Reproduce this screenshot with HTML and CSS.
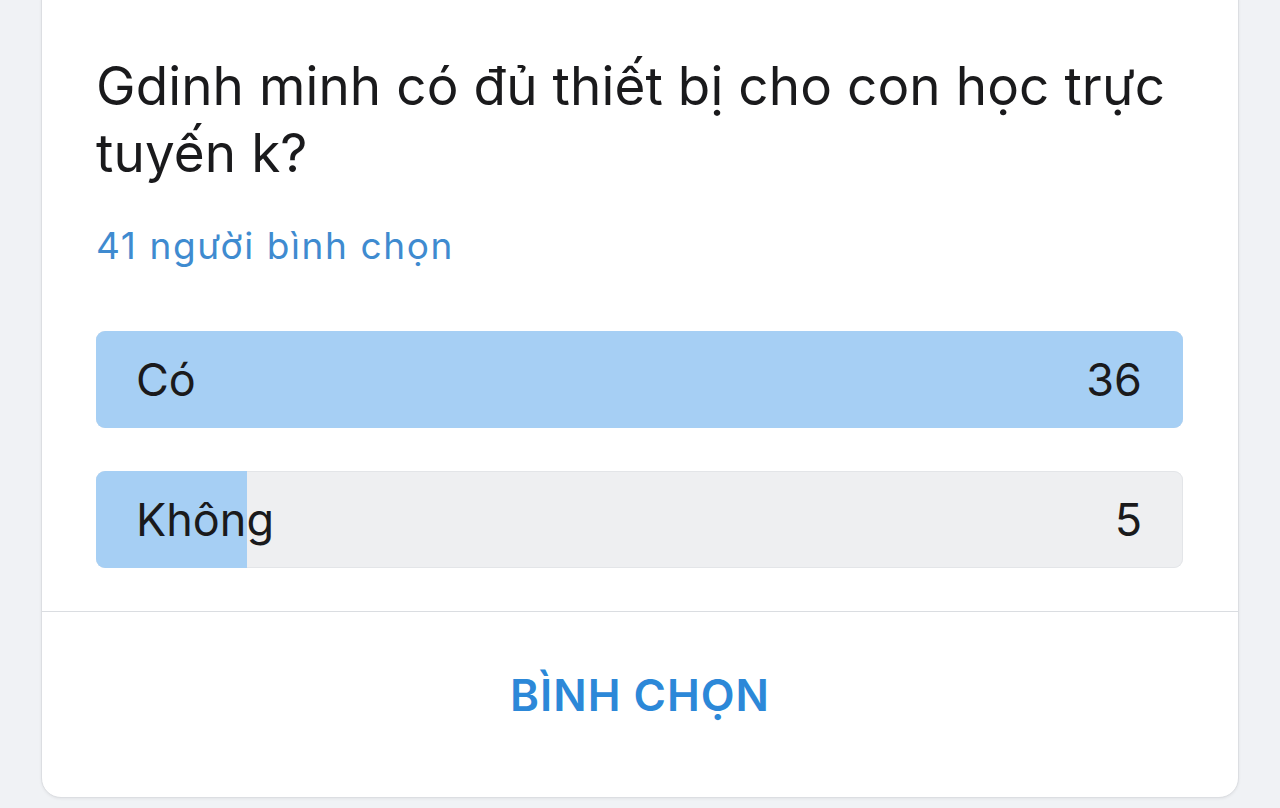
FILE: index.html
```html
<!DOCTYPE html>
<html lang="vi">
<head>
<meta charset="utf-8">
<title>Bình chọn</title>
<link rel="stylesheet" href="styles.css">
</head>
<body>
  <div class="card">
    <div class="poll">
      <h1 class="question">Gdinh minh có đủ thiết bị cho con học trực tuyến k?</h1>
      <div class="count">41 người bình chọn</div>
      <div class="options">
        <div class="option">
          <div class="fill" style="width:100%"></div>
          <span class="label">Có</span>
          <span class="num">36</span>
        </div>
        <div class="option">
          <div class="fill" style="width:13.9%"></div>
          <span class="label">Không</span>
          <span class="num">5</span>
        </div>
      </div>
    </div>
    <div class="actions">
      <button class="vote">BÌNH CHỌN</button>
    </div>
  </div>
</body>
</html>
```

FILE: styles.css
```css
html, body {
  margin: 0;
  padding: 0;
  background: #f0f2f5;
  height: 808px;
  overflow: hidden;
}

body {
  font-family: Inter, "Liberation Sans", Arial, sans-serif;
  color: #1c1e21;
}

.card {
  margin: -20px 0 0 41px;
  width: 1196px;
  background: #fff;
  border: 1px solid #dcdee2;
  border-radius: 20px;
  box-shadow: 0 1px 3px rgba(0, 0, 0, 0.06);
}

.poll {
  padding: 72px 55px 43px 54px;
  border-bottom: 1px solid #dadde1;
}

.question {
  margin: 0;
  font-size: 53px;
  line-height: 67px;
  font-weight: 400;
  color: #1a1a1c;
  letter-spacing: 0.1px;
}

.count {
  margin-top: 37px;
  font-size: 37px;
  line-height: 44px;
  color: #3f8bd0;
  letter-spacing: 1.6px;
}

.options {
  margin-top: 63px;
  display: flex;
  flex-direction: column;
  gap: 43px;
}

.option {
  position: relative;
  height: 97px;
  border-radius: 9px;
  background: #eeeff1;
  box-shadow: inset 0 0 0 1px #e3e5e8;
  overflow: hidden;
  display: flex;
  align-items: center;
  justify-content: space-between;
  padding: 0 41px 0 40px;
  box-sizing: border-box;
}

.fill {
  position: absolute;
  left: 0;
  top: 0;
  bottom: 0;
  background: #a6cff4;
}

.label, .num {
  position: relative;
  font-size: 45px;
  line-height: 54px;
  color: #1a1a1c;
}

.actions {
  padding: 57px 0 75px;
  display: flex;
  justify-content: center;
}

.vote {
  border: 0;
  background: none;
  padding: 0;
  font-family: Inter, "Liberation Sans", Arial, sans-serif;
  font-size: 44px;
  line-height: 53px;
  font-weight: 600;
  color: #2c88d8;
  letter-spacing: 1px;
  cursor: pointer;
}
```
